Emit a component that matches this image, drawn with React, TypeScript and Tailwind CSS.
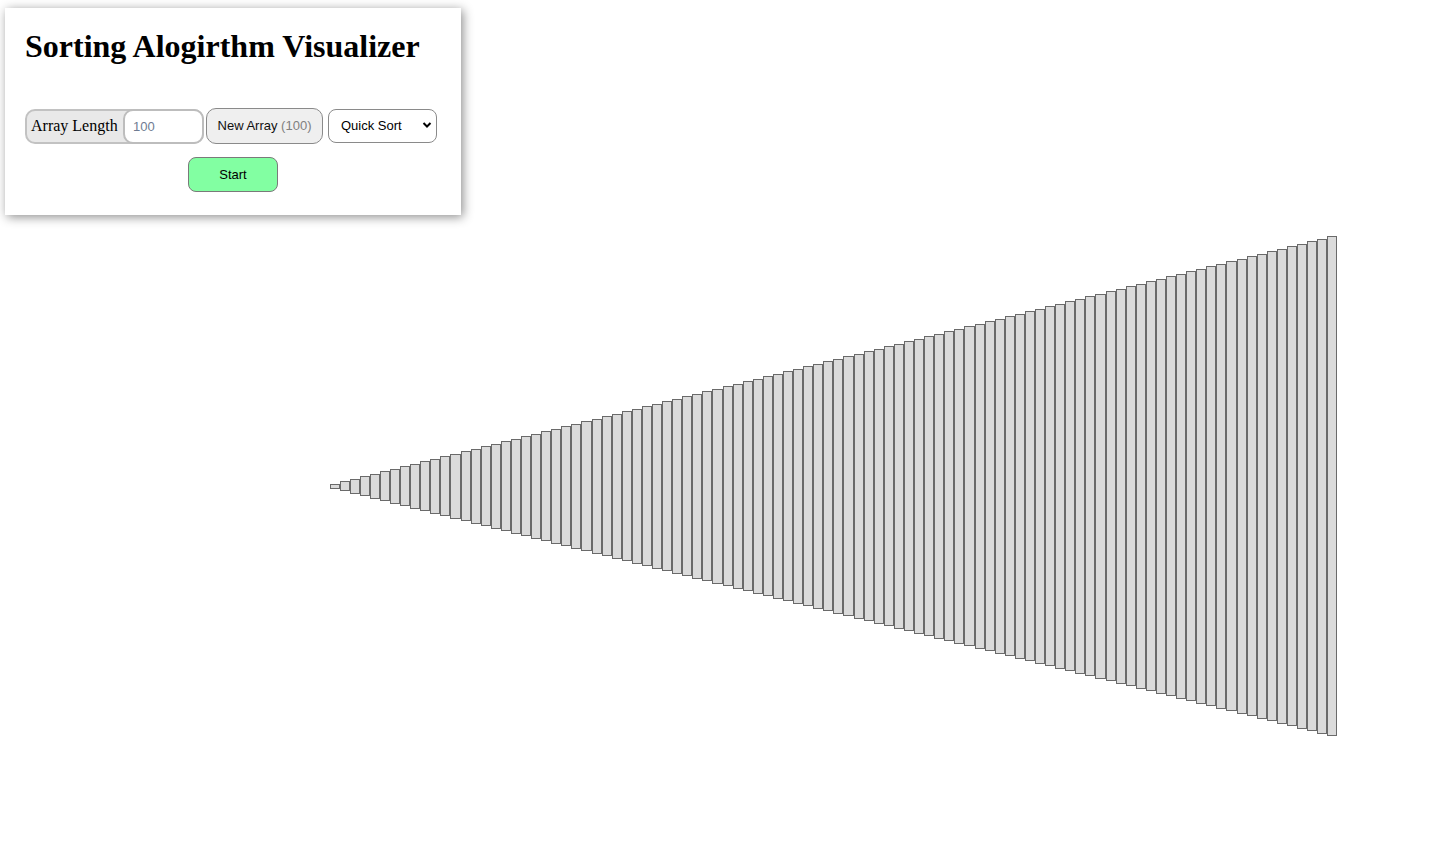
import React from 'react';

const values = Array.from({ length: 100 }, (_, i) => i + 1);

const ControlPanel: React.FC = () => {
  return (
    <div className="absolute left-[5px] top-[8px] w-[456px] h-[207px] bg-white px-5 pt-5 shadow-[2px_2px_10px_rgba(0,0,0,0.45)]">
      <h1 className="text-[32px] leading-[37px] font-bold text-black font-['Liberation_Serif',serif]">
        Sorting Alogirthm Visualizer
      </h1>

      <div className="mt-[43px] flex items-center font-['Liberation_Sans',Arial,sans-serif] text-[13px]">
        <div className="flex items-center h-[35px] w-[179px] bg-[#e9e9e9] border-2 border-[#c2c2c2] rounded-[10px]">
          <span className="pl-[4px] pr-[4px] text-[16px] text-black font-['Liberation_Serif',serif] whitespace-nowrap">
            Array Length
          </span>
          <input
            defaultValue="100"
            className="h-[35px] w-[81px] -mr-[2px] ml-auto bg-white border-2 border-[#bdbdbd] rounded-[10px] pl-[8px] text-[13px] text-[#6f7c92] outline-none"
          />
        </div>

        <button className="ml-[2px] h-[36px] w-[117px] bg-[#efefef] border border-[#8a8a8a] rounded-[10px] text-[#111]">
          New Array <span className="text-[#808080]">(100)</span>
        </button>

        <div className="relative ml-[5px] h-[34px] w-[109px]">
          <select className="appearance-none h-full w-full bg-white border border-[#8a8a8a] rounded-[8px] pl-[12px] text-black outline-none">
            <option>Quick Sort</option>
            <option>Bubble Sort</option>
            <option>Merge Sort</option>
          </select>
          <svg
            className="pointer-events-none absolute right-[5px] top-[12px]"
            width="10"
            height="8"
            viewBox="0 0 10 8"
          >
            <path d="M1.5 2 L5 5.5 L8.5 2" fill="none" stroke="#000" strokeWidth="2" />
          </svg>
        </div>
      </div>

      <div className="mt-[13px] flex justify-center font-['Liberation_Sans',Arial,sans-serif]">
        <button className="h-[35px] w-[90px] bg-[#82ffa2] border border-[#7a7a7a] rounded-[8px] text-[13px] text-black">
          Start
        </button>
      </div>
    </div>
  );
};

const Bars: React.FC = () => {
  return (
    <div className="flex items-center w-[1008px]">
      {values.map(v => (
        <div
          key={v}
          className="flex-1 box-border bg-[#dbdbdb] border border-[#6a6a6a]"
          style={{ height: v * 5 }}
        />
      ))}
    </div>
  );
};

export default function App() {
  return (
    <div className="relative w-full h-screen bg-white overflow-hidden">
      <div className="h-full flex items-center justify-center pl-[234px] pt-[124px]">
        <Bars />
      </div>
      <ControlPanel />
    </div>
  );
}
